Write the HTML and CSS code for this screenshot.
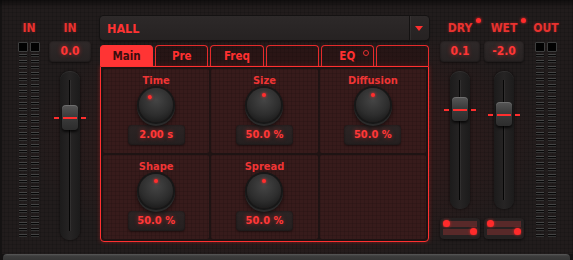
FILE: index.html
```html
<!DOCTYPE html>
<html lang="en">
<head>
  <meta charset="UTF-8">
  <title>Reverb - Hall</title>
  <link rel="stylesheet" href="styles.css">
</head>
<body>

  <div class="plugin">

    <!-- Input meter -->
    <div class="strip meter-strip">
      <div class="label">IN</div>
      <div class="meter">
        <div class="meter-col"><div class="peak"></div><div class="bars"></div></div>
        <div class="meter-col"><div class="peak"></div><div class="bars"></div></div>
      </div>
    </div>

    <!-- Input gain -->
    <div class="strip channel">
      <div class="label">IN</div>
      <div class="value">0.0</div>
      <div class="fader fader-tall">
        <div class="fader-line"></div>
        <div class="thumb thumb-in"><span class="mark"></span></div>
      </div>
    </div>

    <!-- Main section -->
    <div class="center">
      <div class="preset">
        <span class="preset-name">HALL</span>
        <span class="preset-arrow"></span>
      </div>

      <div class="tabs">
        <div class="tab active">Main</div>
        <div class="tab">Pre</div>
        <div class="tab">Freq</div>
        <div class="tab"></div>
        <div class="tab">EQ <span class="tab-dot"></span></div>
        <div class="tab"></div>
      </div>

      <div class="panel">
        <div class="cell">
          <div class="param-label">Time</div>
          <div class="knob"><span class="knob-pointer turn-time"></span></div>
          <div class="param-value">2.00 s</div>
        </div>
        <div class="cell">
          <div class="param-label">Size</div>
          <div class="knob"><span class="knob-pointer"></span></div>
          <div class="param-value">50.0 %</div>
        </div>
        <div class="cell">
          <div class="param-label">Diffusion</div>
          <div class="knob"><span class="knob-pointer"></span></div>
          <div class="param-value">50.0 %</div>
        </div>
        <div class="cell">
          <div class="param-label">Shape</div>
          <div class="knob"><span class="knob-pointer"></span></div>
          <div class="param-value">50.0 %</div>
        </div>
        <div class="cell">
          <div class="param-label">Spread</div>
          <div class="knob"><span class="knob-pointer"></span></div>
          <div class="param-value">50.0 %</div>
        </div>
        <div class="cell"></div>
      </div>
    </div>

    <!-- Dry -->
    <div class="strip channel dry">
      <div class="label">DRY<span class="led"></span></div>
      <div class="value">0.1</div>
      <div class="fader">
        <div class="fader-line"></div>
        <div class="thumb thumb-dry"><span class="mark"></span></div>
      </div>
      <div class="pan">
        <div class="pan-bar"><span class="pan-dot"></span></div>
        <div class="pan-bar right"><span class="pan-dot"></span></div>
      </div>
    </div>

    <!-- Wet -->
    <div class="strip channel wet">
      <div class="label">WET<span class="led"></span></div>
      <div class="value">-2.0</div>
      <div class="fader">
        <div class="fader-line"></div>
        <div class="thumb thumb-wet"><span class="mark"></span></div>
      </div>
      <div class="pan">
        <div class="pan-bar"><span class="pan-dot"></span></div>
        <div class="pan-bar right"><span class="pan-dot"></span></div>
      </div>
    </div>

    <!-- Output meter -->
    <div class="strip meter-strip out">
      <div class="label">OUT</div>
      <div class="meter">
        <div class="meter-col"><div class="peak"></div><div class="bars"></div></div>
        <div class="meter-col"><div class="peak"></div><div class="bars"></div></div>
      </div>
    </div>

  </div>

  <div class="footer-bar"></div>

</body>
</html>
```

FILE: styles.css
```css
/* Global */
body {
  margin: 0;
  width: 573px;
  height: 260px;
  overflow: hidden;
  background: #141212;
  font-family: "DejaVu Sans Condensed", "DejaVu Sans", sans-serif;
  font-stretch: condensed;
  font-weight: bold;
  color: #e8322f;
}

/* Plugin body */
.plugin {
  height: 238px;
  display: flex;
  align-items: flex-start;
  padding: 16px 0 0 18px;
  background-color: #211c1c;
  background-image:
    linear-gradient(rgba(0, 0, 0, 0.12) 1px, transparent 1px),
    linear-gradient(90deg, rgba(0, 0, 0, 0.12) 1px, transparent 1px),
    radial-gradient(ellipse at 50% 55%, rgba(120, 20, 20, 0.35), rgba(0, 0, 0, 0) 65%);
  background-size: 4px 4px, 4px 4px, 100% 100%;
  box-shadow: inset 0 6px 4px -2px rgba(0, 0, 0, 0.45), inset 2px 0 0 #161414;
}

/* Strips */
.strip {
  display: flex;
  flex-direction: column;
  align-items: center;
  flex-shrink: 0;
}
.label {
  position: relative;
  height: 24px;
  line-height: 24px;
  font-size: 12px;
  text-shadow: 0 0 3px rgba(255, 40, 40, 0.35);
}
.led {
  position: absolute;
  top: 2px;
  right: -9px;
  width: 5px;
  height: 5px;
  border-radius: 50%;
  background: #ff2b2b;
  box-shadow: 0 0 3px #ff2b2b;
}

/* Meters */
.meter-strip {
  width: 22px;
}
.meter-strip.out {
  margin-left: 11px;
}
.meter {
  display: flex;
  gap: 2px;
  margin-top: 2px;
}
.meter-col {
  width: 10px;
}
.peak {
  width: 8px;
  height: 8px;
  background: #020202;
  border: 1px solid #3e3e3e;
  border-radius: 1px;
}
.bars {
  margin: 2px 1px 0;
  width: 8px;
  height: 184px;
  background: repeating-linear-gradient(to bottom,
    #444 0, #444 1px,
    #060606 1px, #060606 2px,
    #333 2px, #333 3px,
    transparent 3px, transparent 6px);
  border-radius: 1px;
}

/* Channel strips */
.channel {
  width: 42px;
  margin-left: 9px;
}
.channel.dry {
  width: 40px;
  margin-left: 11px;
}
.channel.wet {
  width: 40px;
  margin-left: 4px;
}
.value {
  margin-top: 1px;
  width: 100%;
  height: 21px;
  line-height: 21px;
  text-align: center;
  font-size: 12px;
  color: #ff3636;
  text-shadow: 0 0 4px rgba(255, 40, 40, 0.6);
  background: linear-gradient(#2f2929, #272222);
  border-radius: 4px;
  box-shadow: inset 0 0 2px rgba(0, 0, 0, 0.6), 0 1px 2px rgba(0, 0, 0, 0.5);
}

/* Faders */
.fader {
  position: relative;
  margin-top: 9px;
  width: 20px;
  height: 138px;
  border-radius: 9px;
  background: linear-gradient(90deg, #1c1b1b, #262424 50%, #1c1b1b);
  box-shadow: 0 0 3px rgba(0, 0, 0, 0.7), inset 0 1px 0 rgba(255, 255, 255, 0.05);
}
.fader-tall {
  height: 169px;
}
.fader-line {
  position: absolute;
  left: 9px;
  top: 9px;
  bottom: 9px;
  width: 1px;
  background: #050505;
  box-shadow: 1px 0 0 rgba(255, 255, 255, 0.05);
}
.thumb {
  position: absolute;
  left: 2px;
  width: 16px;
  height: 25px;
  border-radius: 4px;
  background: linear-gradient(#575757, #3c3c3c 45%, #2c2c2c);
  box-shadow: 0 2px 3px rgba(0, 0, 0, 0.8), inset 0 1px 0 rgba(255, 255, 255, 0.15);
}
.thumb-in { top: 34px; }
.thumb-dry { top: 26px; height: 24px; }
.thumb-wet { top: 31px; height: 24px; }
.mark {
  position: absolute;
  left: -8px;
  top: 12px;
  width: 32px;
  height: 2px;
  background: linear-gradient(90deg,
    #ff2e2e 0, #ff2e2e 5px,
    transparent 5px, transparent 9px,
    #ff2e2e 9px, #ff2e2e 23px,
    transparent 23px, transparent 27px,
    #ff2e2e 27px);
}

/* Pan */
.pan {
  margin-top: 9px;
  width: 40px;
  height: 21px;
  padding: 3px 3px 0;
  box-sizing: border-box;
  background: #252121;
  border-radius: 4px;
  box-shadow: 0 1px 3px rgba(0, 0, 0, 0.6);
}
.pan-bar {
  position: relative;
  height: 6px;
  margin-bottom: 2px;
  background: #582929;
}
.pan-dot {
  position: absolute;
  top: -1px;
  left: 0;
  width: 7px;
  height: 7px;
  border-radius: 50%;
  background: #ff2b2b;
  box-shadow: 0 0 3px rgba(255, 40, 40, 0.8);
}
.pan-bar.right .pan-dot {
  left: auto;
  right: 0;
}

/* Center */
.center {
  width: 329px;
  margin-left: 9px;
  flex-shrink: 0;
}
.preset {
  display: flex;
  align-items: center;
  height: 24px;
  border-radius: 4px;
  background: linear-gradient(#2d2929, #262222);
  box-shadow: 0 0 0 1px #141212, 0 2px 3px rgba(0, 0, 0, 0.5);
}
.preset-name {
  flex: 1;
  padding-left: 7px;
  font-size: 12.5px;
  color: #ff3333;
}
.preset-arrow {
  position: relative;
  width: 19px;
  height: 24px;
  border-left: 1px solid #141212;
  box-shadow: inset 1px 0 0 rgba(255, 255, 255, 0.05);
}
.preset-arrow::after {
  content: "";
  position: absolute;
  left: 5px;
  top: 10px;
  border-left: 4px solid transparent;
  border-right: 4px solid transparent;
  border-top: 5px solid #ff2e2e;
}

/* Tabs */
.tabs {
  display: flex;
  gap: 2px;
  margin-top: 5px;
  height: 21px;
}
.tab {
  position: relative;
  flex: 1;
  text-align: center;
  line-height: 20px;
  font-size: 11.5px;
  color: #ff3030;
  border: 1px solid #e52b2b;
  border-bottom: none;
  border-radius: 4px 4px 0 0;
  background: rgba(40, 10, 10, 0.3);
}
.tab.active {
  background: #ff3434;
  border-color: #ff3434;
  color: #3a0e0e;
}
.tab-dot {
  position: absolute;
  top: 4px;
  right: 4px;
  width: 4px;
  height: 4px;
  border: 1px solid #e53030;
  border-radius: 50%;
}

/* Parameter panel */
.panel {
  display: grid;
  grid-template-columns: repeat(3, 1fr);
  grid-template-rows: repeat(2, 1fr);
  gap: 2px;
  padding: 2px;
  height: 170px;
  border: 1px solid #ff3030;
  border-radius: 0 0 4px 4px;
  background: #1e1313;
  box-shadow: 0 0 4px rgba(255, 40, 40, 0.35);
}
.cell {
  display: flex;
  flex-direction: column;
  align-items: center;
  padding-top: 5px;
  border-radius: 2px;
  background-color: #371b1b;
  background-image:
    linear-gradient(rgba(0, 0, 0, 0.1) 1px, transparent 1px),
    linear-gradient(90deg, rgba(0, 0, 0, 0.1) 1px, transparent 1px);
  background-size: 4px 4px;
}
.param-label {
  height: 14px;
  line-height: 14px;
  font-size: 11px;
  color: #ef3535;
}
.knob {
  position: relative;
  width: 34px;
  height: 34px;
  margin: 0 0 3px;
  border-radius: 50%;
  background: radial-gradient(circle at 50% 35%, #454545, #2d2d2d 55%, #1d1d1d 80%);
  box-shadow: 0 0 0 2px #171717, 0 2px 0 2px #2a2a2a, 0 3px 4px 2px rgba(0, 0, 0, 0.6);
}
.knob-pointer {
  position: absolute;
  left: 0;
  top: 0;
  width: 34px;
  height: 34px;
}
.knob-pointer::before {
  content: "";
  position: absolute;
  left: 15px;
  top: 5px;
  width: 4px;
  height: 4px;
  border-radius: 50%;
  background: #ff2e2e;
  box-shadow: 0 0 3px #ff2e2e;
}
.turn-time {
  transform: rotate(-38deg);
}
.param-value {
  width: 57px;
  height: 20px;
  line-height: 20px;
  text-align: center;
  font-size: 11px;
  color: #ff3838;
  text-shadow: 0 0 4px rgba(255, 40, 40, 0.6);
  border-radius: 4px;
  background: linear-gradient(#2c2424, #251f1f);
  box-shadow: inset 0 0 2px rgba(0, 0, 0, 0.6), 0 1px 2px rgba(0, 0, 0, 0.4);
}

/* Bottom bar */
.footer-bar {
  height: 6px;
  margin: 0 3px;
  background: linear-gradient(#5a5a5a, #3c3c3c 2px, #363636);
  border-radius: 4px 4px 0 0;
}
```
